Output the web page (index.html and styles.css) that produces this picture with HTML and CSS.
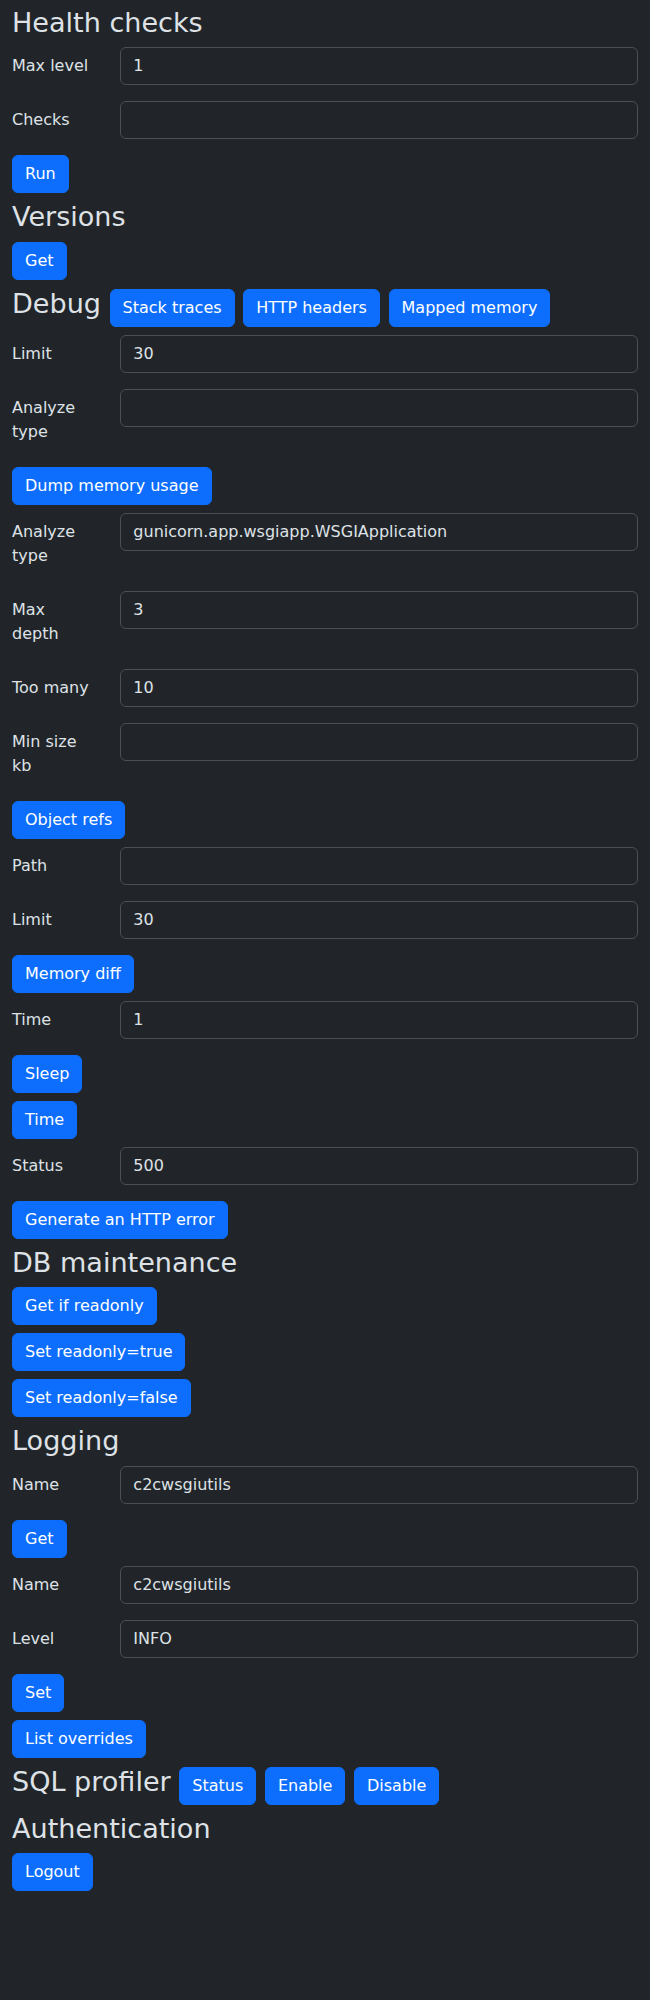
FILE: index.html
```html
<!DOCTYPE html>
<html lang="en">
<head>
<meta charset="utf-8">
<title>c2cwsgiutils</title>
<link rel="stylesheet" href="styles.css">
</head>
<body>
<div class="page">
  <h2 class="title">Health checks</h2>
  <div class="field"><label class="field-label">Max level</label><input class="field-input" type="text" value="1"></div>
  <div class="field"><label class="field-label">Checks</label><input class="field-input" type="text" value=""></div>
  <div class="actions"><button class="btn">Run</button></div>

  <h2 class="title">Versions</h2>
  <div class="actions"><button class="btn">Get</button></div>

  <h2 class="title">Debug <button class="btn">Stack traces</button> <button class="btn">HTTP headers</button> <button class="btn">Mapped memory</button></h2>
  <div class="field"><label class="field-label">Limit</label><input class="field-input" type="text" value="30"></div>
  <div class="field"><label class="field-label">Analyze type</label><input class="field-input" type="text" value=""></div>
  <div class="actions"><button class="btn">Dump memory usage</button></div>
  <div class="field"><label class="field-label">Analyze type</label><input class="field-input" type="text" value="gunicorn.app.wsgiapp.WSGIApplication"></div>
  <div class="field"><label class="field-label">Max depth</label><input class="field-input" type="text" value="3"></div>
  <div class="field"><label class="field-label">Too many</label><input class="field-input" type="text" value="10"></div>
  <div class="field"><label class="field-label">Min size kb</label><input class="field-input" type="text" value=""></div>
  <div class="actions"><button class="btn">Object refs</button></div>
  <div class="field"><label class="field-label">Path</label><input class="field-input" type="text" value=""></div>
  <div class="field"><label class="field-label">Limit</label><input class="field-input" type="text" value="30"></div>
  <div class="actions"><button class="btn">Memory diff</button></div>
  <div class="field"><label class="field-label">Time</label><input class="field-input" type="text" value="1"></div>
  <div class="actions"><button class="btn">Sleep</button></div>
  <div class="actions"><button class="btn">Time</button></div>
  <div class="field"><label class="field-label">Status</label><input class="field-input" type="text" value="500"></div>
  <div class="actions"><button class="btn">Generate an HTTP error</button></div>

  <h2 class="title">DB maintenance</h2>
  <div class="actions"><button class="btn">Get if readonly</button></div>
  <div class="actions"><button class="btn">Set readonly=true</button></div>
  <div class="actions"><button class="btn">Set readonly=false</button></div>

  <h2 class="title">Logging</h2>
  <div class="field"><label class="field-label">Name</label><input class="field-input" type="text" value="c2cwsgiutils"></div>
  <div class="actions"><button class="btn">Get</button></div>
  <div class="field"><label class="field-label">Name</label><input class="field-input" type="text" value="c2cwsgiutils"></div>
  <div class="field"><label class="field-label">Level</label><input class="field-input" type="text" value="INFO"></div>
  <div class="actions"><button class="btn">Set</button></div>
  <div class="actions"><button class="btn">List overrides</button></div>

  <h2 class="title">SQL profiler <button class="btn">Status</button> <button class="btn">Enable</button> <button class="btn">Disable</button></h2>

  <h2 class="title">Authentication</h2>
  <div class="actions"><button class="btn">Logout</button></div>
</div>
</body>
</html>
```
FILE: styles.css
```css
html {
  background: #212529;
}
body {
  margin: 0;
  min-height: 2000px;
  background: #212529;
  color: #dee2e6;
  font-family: "DejaVu Sans", sans-serif;
  font-size: 16px;
  line-height: 1.5;
}
.page {
  padding: 7px 12px 0 12px;
}
.title {
  margin: 0 0 8px 0;
  font-size: calc(1.325rem + .9vw);
  font-weight: 400;
  line-height: 1.2;
  color: #dee2e6;
}
.field {
  display: grid;
  grid-template-columns: calc((100% + 24px) / 6 - 24px) 1fr;
  column-gap: 24px;
  margin-bottom: 16px;
}
.field-label {
  padding: 7px 0;
  font-size: 16px;
  line-height: 1.5;
}
.field-input {
  display: block;
  width: 100%;
  box-sizing: border-box;
  align-self: start;
  padding: 6px 12px;
  font-family: "DejaVu Sans", sans-serif;
  font-size: 16px;
  line-height: 1.5;
  color: #dee2e6;
  background: #212529;
  border: 1px solid #495057;
  border-radius: 6px;
  outline: none;
}
.actions {
  display: flex;
  margin-bottom: 8px;
}
.btn {
  display: inline-block;
  box-sizing: border-box;
  padding: 6px 12px;
  font-family: "DejaVu Sans", sans-serif;
  font-size: 16px;
  font-weight: 400;
  line-height: 1.5;
  color: #fff;
  background: #0d6efd;
  border: 1px solid #0d6efd;
  border-radius: 6px;
  vertical-align: baseline;
  cursor: pointer;
}
```
